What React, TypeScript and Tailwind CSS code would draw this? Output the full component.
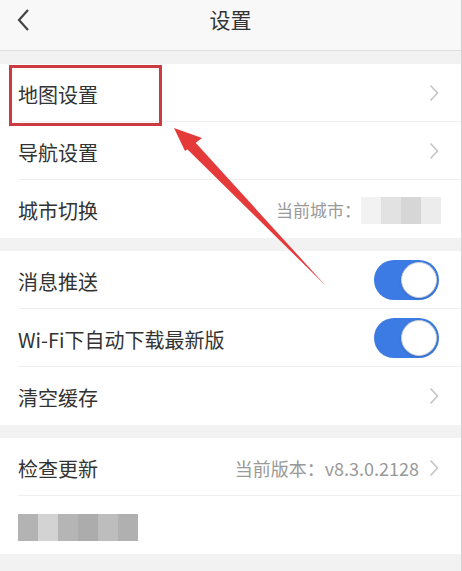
import React from "react";

const font = { fontFamily: '"Noto Sans CJK SC", "Noto Sans", sans-serif' };

const Chevron = () => (
  <svg width="10" height="18" viewBox="0 0 10 18" fill="none" className="shrink-0">
    <path d="M1.5 1.5 L8.5 9 L1.5 16.5" stroke="#c4c4c4" strokeWidth="1.6" />
  </svg>
);

const Toggle = () => (
  <div className="w-[65px] h-[40px] rounded-full bg-[#3b7be3] relative shrink-0">
    <div className="absolute right-[2px] top-[2px] w-[36px] h-[36px] rounded-full bg-white border border-[#c9ced6] shadow-sm" />
  </div>
);

// blurred placeholder blocks
const Mosaic = ({ cells }: { cells: string[] }) => (
  <div className="flex">
    {cells.map((c, i) => (
      <div key={i} className="w-[20px] h-[27px]" style={{ background: c }} />
    ))}
  </div>
);

type RowProps = {
  label?: React.ReactNode;
  right?: React.ReactNode;
  divider?: boolean;
};

const Row = ({ label, right, divider }: RowProps) => (
  <div className="relative h-[58px] flex items-center pl-[18px] pr-[22px] bg-white">
    <div className="flex-1 text-[20px] text-[#333] mt-[4px]">{label}</div>
    {right}
    {divider && <div className="absolute left-[18px] right-0 bottom-0 h-px bg-[#efefef]" />}
  </div>
);

export default function App() {
  return (
    <div className="w-[462px] h-[571px] bg-[#f2f2f2] relative overflow-hidden border-r border-[#d0d0d0]" style={font}>
      <div className="h-[51px] bg-[#f8f8f8] border-b border-[#dedede] flex items-center relative">
        <svg width="14" height="24" viewBox="0 0 14 24" fill="none" className="absolute left-[16px] top-[8px]">
          <path d="M12 2 L3 12 L12 22" stroke="#444" strokeWidth="2.2" />
        </svg>
        <div className="flex-1 text-center text-[21px] text-[#333] -mt-[11px]">设置</div>
      </div>

      <div className="mt-[13px]">
        <Row label="地图设置" right={<Chevron />} divider />
        <Row label="导航设置" right={<Chevron />} divider />
        <Row
          label="城市切换"
          right={
            <div className="flex items-center text-[17px] text-[#999] -mr-[2px] mt-[2px]">
              当前城市：
              <Mosaic cells={["#f2f2f2", "#e2e2e2", "#d6d6d6", "#ececec"]} />
            </div>
          }
        />
      </div>

      <div className="mt-[13px]">
        <Row label="消息推送" right={<Toggle />} divider />
        <Row label="Wi-Fi下自动下载最新版" right={<Toggle />} divider />
        <Row label="清空缓存" right={<Chevron />} />
      </div>

      <div className="mt-[13px]">
        <Row
          label="检查更新"
          right={
            <div className="flex items-center gap-[10px] text-[18px] text-[#999] mt-[2px]">
              当前版本：v8.3.0.2128
              <Chevron />
            </div>
          }
          divider
        />
        <Row
          label={
            <Mosaic cells={["#b3b3b3", "#d3d3d3", "#b5b5b5", "#acacac", "#bdbdbd", "#b0b0b0"]} />
          }
        />
      </div>

      {/* highlight box + arrow */}
      <div className="absolute left-[9px] top-[65px] w-[153px] h-[61px] border-[3px] border-[#cc3a42]" />
      <svg className="absolute left-0 top-0" width="462" height="571" viewBox="0 0 462 571">
        <polygon points="326,286 186,148 194,141" fill="#e53a3a" />
        <polygon points="174,128 202,138 185,151" fill="#e53a3a" />
      </svg>
    </div>
  );
}
